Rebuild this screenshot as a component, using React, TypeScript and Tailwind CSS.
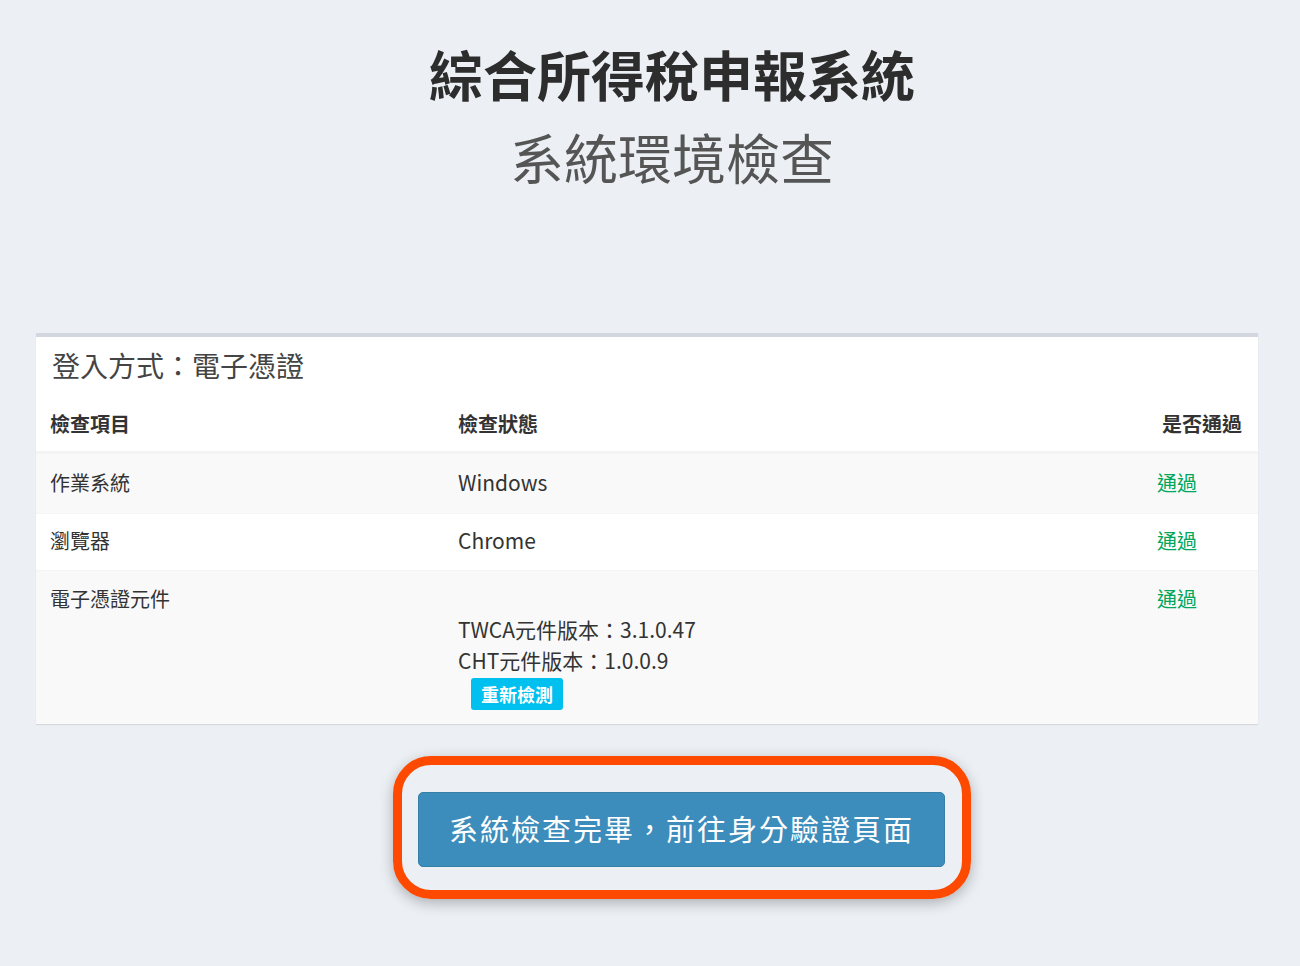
const FONT = { fontFamily: '"Noto Sans CJK TC", "Noto Sans", sans-serif' };

const ROWS = [
  { label: "作業系統", status: "Windows", bg: "bg-[#f9f9f9]", h: "h-[60px]" },
  { label: "瀏覽器", status: "Chrome", bg: "bg-white", h: "h-[57px]" },
];

function PassText() {
  return <span className="text-[#00a65a]">通過</span>;
}

export default function App() {
  return (
    <div className="min-h-[966px] bg-[#ecf0f5] pb-[60px] text-[#333]" style={FONT}>
      {/* page title */}
      <div className="pl-[44px] pt-[42px] text-center">
        <h1 className="text-[54px] font-bold leading-[64px] text-[#2d2d2d]">綜合所得稅申報系統</h1>
        <h2 className="mt-[19px] text-[54px] font-normal leading-[64px] text-[#555]">系統環境檢查</h2>
      </div>

      {/* environment check box */}
      <div className="ml-[36px] mt-[144px] w-[1222px] border-t-4 border-[#d2d6de] bg-white shadow-[0_1px_1px_rgba(0,0,0,0.1)]">
        <div className="px-[16px] pt-[8px] text-[28px] leading-[40px] text-[#444]">登入方式：電子憑證</div>

        <div className="flex border-b-2 border-[#f4f4f4] pb-[12px] pl-[14px] pr-[16px] pt-[24px] text-[20px] font-bold leading-[30px] text-[#333]">
          <div className="w-[408px]">檢查項目</div>
          <div className="flex-1">檢查狀態</div>
          <div>是否通過</div>
        </div>

        {ROWS.map((row) => (
          <div
            className={`flex items-center border-t border-[#f4f4f4] pb-[2px] pl-[14px] pr-[16px] text-[20px] text-[#333] ${row.bg} ${row.h}`}
            key={row.label}
          >
            <div className="w-[408px]">{row.label}</div>
            <div className="flex-1 text-[21px]">{row.status}</div>
            <div className="w-[85px]">
              <PassText />
            </div>
          </div>
        ))}

        <div className="flex h-[154px] border-t border-[#f4f4f4] bg-[#f9f9f9] pl-[14px] pr-[16px] pt-[12px] text-[20px] leading-[31px] text-[#333]">
          <div className="w-[408px]">電子憑證元件</div>
          <div className="flex-1 text-[21px]">
            <div className="h-[31px]" />
            <div>TWCA元件版本：3.1.0.47</div>
            <div>CHT元件版本：1.0.0.9</div>
            <button
              className="ml-[13px] mt-[2px] h-[32px] w-[92px] rounded-[3px] bg-[#00c0ef] text-[18px] font-bold leading-[32px] text-white"
              type="button"
            >
              重新檢測
            </button>
          </div>
          <div className="w-[85px]">
            <PassText />
          </div>
        </div>
      </div>

      {/* highlighted next step */}
      <div className="ml-[393px] mt-[32px] h-[143px] w-[578px] rounded-[38px] border-[9px] border-[#fd4a00] pl-[16px] pt-[27px] shadow-[0_4px_14px_rgba(0,0,0,0.28)]">
        <button
          className="h-[75px] w-[527px] rounded-[5px] border border-[#367fa9] bg-[#3c8dbc] pb-[3px] text-[29px] leading-[70px] tracking-[2px] text-white"
          type="button"
        >
          系統檢查完畢，前往身分驗證頁面
        </button>
      </div>
    </div>
  );
}
